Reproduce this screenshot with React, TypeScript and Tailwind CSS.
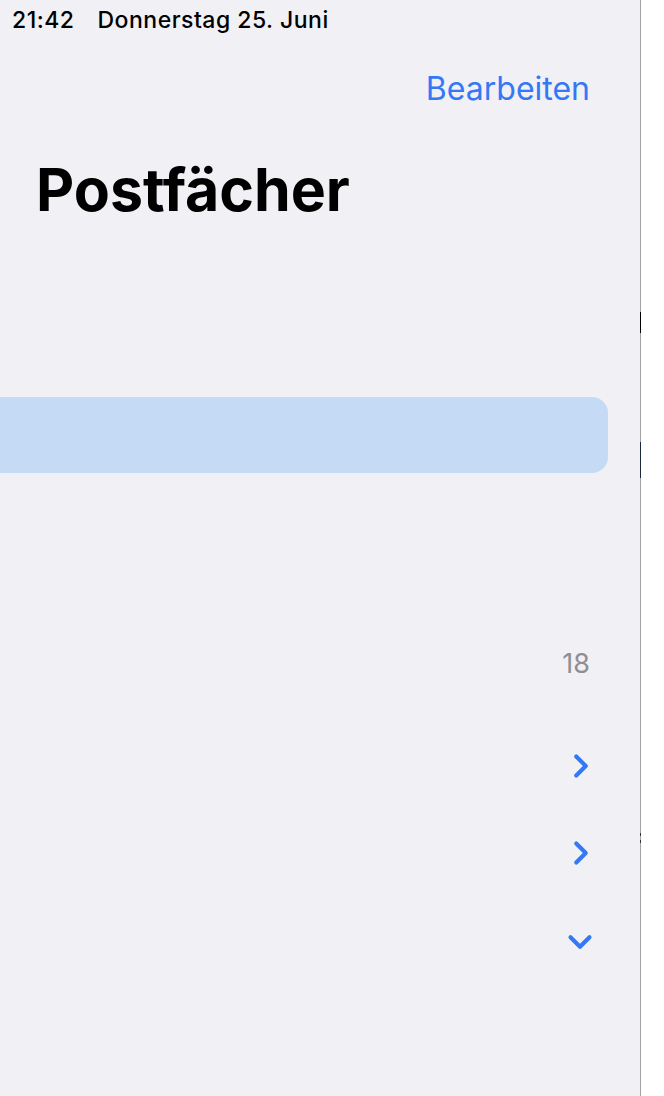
import { ChevronDown, ChevronRight } from 'lucide-react';

const font = { fontFamily: 'Inter, "Noto Sans", sans-serif' };

export default function App() {
  return (
    <div className="flex w-[664px] h-[1096px] bg-white overflow-hidden" style={font}>
      <div className="relative w-[641px] h-full bg-[#f1f0f5] border-r border-[#a3a3a6] flex flex-col">
        <div className="h-[40px] flex items-center pl-[12px] gap-[23px] text-[23px] font-medium text-black leading-none tracking-[0.5px]">
          <span>21:42</span>
          <span>Donnerstag 25. Juni</span>
        </div>
        <div className="h-[50px] mt-[24px] flex items-center justify-end pr-[50px]">
          <span className="text-[32px] text-[#3478f6] leading-none">Bearbeiten</span>
        </div>
        <h1 className="mt-[46px] pl-[36px] text-[59px] font-bold text-black leading-none">
          Postfächer
        </h1>
        <div className="mt-[178px] w-[608px] h-[76px] bg-[#c5daf4] rounded-r-[16px]" />
        <div className="mt-[172px] h-[36px] flex items-center justify-end pr-[50px]">
          <span className="text-[27px] text-[#8e8e93] leading-none">18</span>
        </div>
        <div className="mt-[67px] h-[36px] flex items-center justify-end pr-[40px]">
          <ChevronRight className="w-[38px] h-[38px] shrink-0 text-[#3478f6]" strokeWidth={2.6} />
        </div>
        <div className="mt-[51px] h-[36px] flex items-center justify-end pr-[40px]">
          <ChevronRight className="w-[38px] h-[38px] shrink-0 text-[#3478f6]" strokeWidth={2.6} />
        </div>
        <div className="mt-[53px] h-[36px] flex items-center justify-end pr-[41px]">
          <ChevronDown className="w-[38px] h-[38px] shrink-0 text-[#3478f6]" strokeWidth={2.6} />
        </div>
        <div className="absolute right-[-1px] top-[312px] w-[1px] h-[21px] bg-black" />
        <div className="absolute right-[-1px] top-[442px] w-[1px] h-[36px] bg-[#1b2a3a]" />
        <div className="absolute right-[-1px] top-[833px] w-[1px] h-[3px] bg-[#333]" />
        <div className="absolute right-[-1px] top-[840px] w-[1px] h-[3px] bg-[#333]" />
      </div>
    </div>
  );
}
